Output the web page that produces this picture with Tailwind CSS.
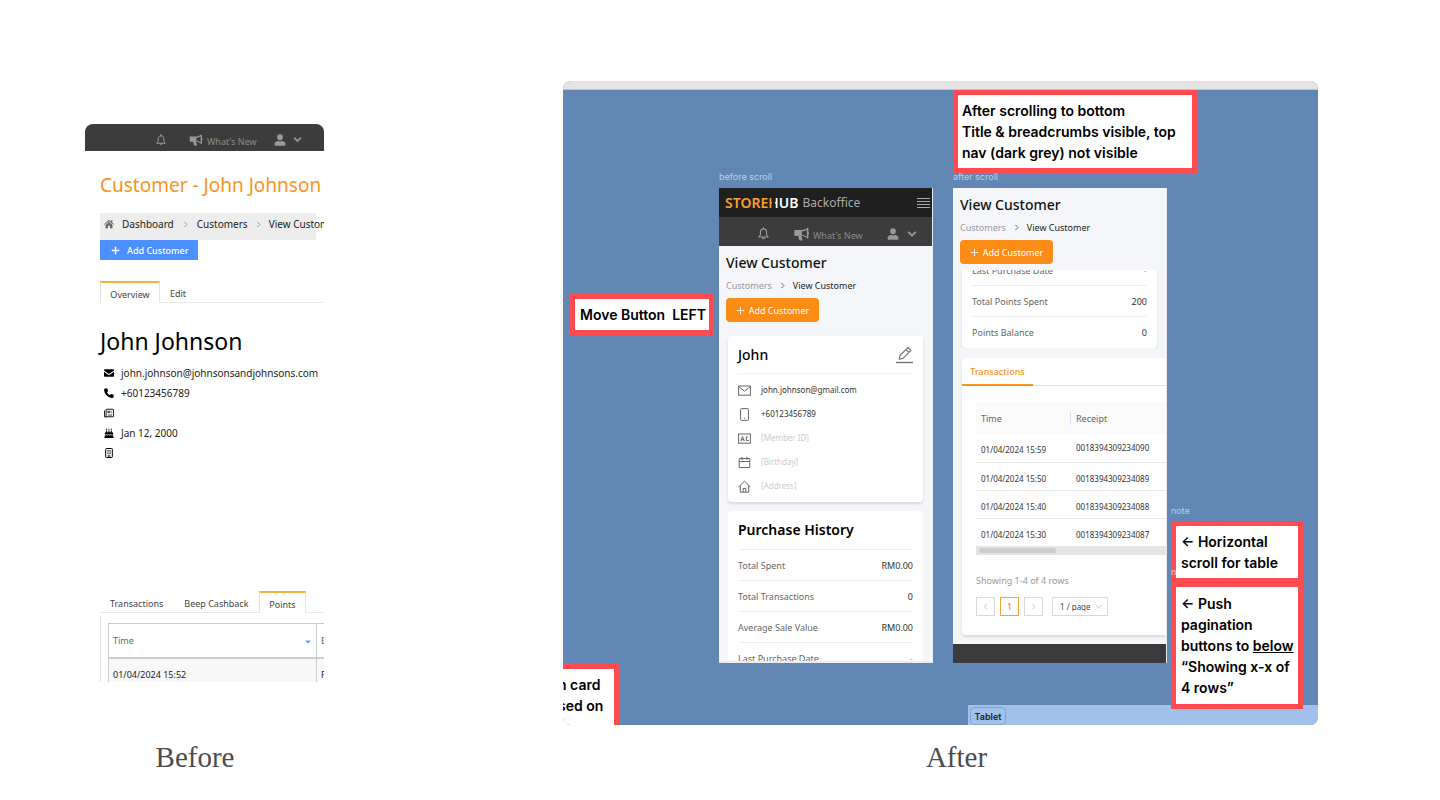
<!DOCTYPE html>
<html lang="en">
<head>
  <meta charset="UTF-8">
  <title>Customer page - Before / After</title>
  <script src="https://cdn.jsdelivr.net/npm/@tailwindcss/browser@4"></script>
</head>
<body class="bg-white text-[#222] font-['Noto_Sans',sans-serif] leading-none">
  <!-- Shared icons -->
  <svg class="hidden">
    <symbol id="bell" viewBox="0 0 24 24"><path d="M12 3.500c-4 0-5.600 3-5.600 6.500v4.500L3.500 18.500h17L17.600 14.500V10c0-3.500-1.600-6.500-5.600-6.500zM12 1v2.500M9.800 19c0 3.500 4.400 3.500 4.400 0" fill="none" stroke="currentColor" stroke-width="2" stroke-linejoin="round" stroke-linecap="round"/></symbol>
    <symbol id="horn" viewBox="0 0 26 24"><path d="M2.500 5h9C16 5 20 4 23 1.500c1-.8 2 0 2 1v5.800c1.300.8 1.300 3.600 0 4.400v5.800c0 1-1 1.800-2 1-3-2.500-6.500-4-9.800-4.400-.8 1.600.2 2.500 1 3.500-.6 1.500-.2 2.400 1.200 3.600-1.500 1.600-5 1.600-6.200.4C8 19.800 7.400 17.500 8 15.500H2.500C1 15.500.5 14.500.5 13.500V7c0-1 .5-2 2-2zM13.500 7.800v5.400c3 .3 6 1.500 8.800 3.400V4.500c-2.800 1.900-5.800 3-8.800 3.300z" fill="currentColor" fill-rule="evenodd"/></symbol>
    <symbol id="user" viewBox="0 0 24 24"><path d="M12 12.500a5.700 5.900 0 1 0 0-11.800 5.700 5.900 0 0 0 0 11.800zM8 14c-4 0-7 2.500-7 6.500 0 1.800.7 3 2.500 3h17c1.800 0 2.500-1.200 2.500-3 0-4-3-6.500-7-6.500-2.500 1-5.500 1-8 0z" fill="currentColor"/></symbol>
    <symbol id="down" viewBox="0 0 12 12"><path d="M1.500 3.500 6 8l4.500-4.500" fill="none" stroke="currentColor" stroke-width="2.200"/></symbol>
    <symbol id="right" viewBox="0 0 12 12"><path d="M4 1.500 8.500 6 4 10.500" fill="none" stroke="currentColor" stroke-width="1.500"/></symbol>
    <symbol id="left" viewBox="0 0 12 12"><path d="M8.500 1.500 4 6l4.500 4.500" fill="none" stroke="currentColor" stroke-width="1.500"/></symbol>
    <symbol id="plus" viewBox="0 0 12 12"><path d="M6 1v10M1 6h10" fill="none" stroke="currentColor" stroke-width="1.200"/></symbol>
  </svg>

  <main class="flex min-h-screen items-start gap-[239px] pl-[85px] pr-[122px] overflow-hidden">

    <!-- Before -->
    <figure class="w-[239px] shrink-0 pt-[124px]">
      <div class="h-[558px] overflow-hidden rounded-lg">
        <nav class="flex h-[27px] items-center bg-[#3c3c3c] pt-1 pl-[70px] text-[9px] text-[#999]">
          <button aria-label="Notifications"><svg class="size-3"><use href="#bell"/></svg></button>
          <a href="#" class="ml-[22px] flex items-center gap-1 text-[#8a8a8a]"><svg class="h-3 w-[14px] text-[#999]"><use href="#horn"/></svg><span class="pt-1">What's New</span></a>
          <button aria-label="Account" class="ml-[17px] flex items-center gap-[7px]"><svg class="size-3"><use href="#user"/></svg><svg class="size-[9px]"><use href="#down"/></svg></button>
        </nav>

        <div class="pl-[15px]">
          <h1 class="mt-[22px] whitespace-nowrap text-[19px] leading-6 text-[#f7941d]">Customer - John Johnson</h1>
          <div class="mt-4 flex h-[27px] w-[216px] items-center whitespace-nowrap bg-[#ededed] pb-[5px] pl-1 text-[10px]">
            <svg class="mr-2 size-[10px] shrink-0 text-[#666]" viewBox="0 0 12 12"><path d="M6 1 0 6.200l.7.8L6 2.600 11.300 7l.7-.8-2-1.700V1.500H8.500v1.700zM6 3.700 1.800 7.200V11h3V8h2.400v3h3V7.200z" fill="currentColor"/></svg>
            <a href="#">Dashboard</a>
            <svg class="mx-2 size-[7px] shrink-0 text-[#888]"><use href="#right"/></svg>
            <a href="#">Customers</a>
            <svg class="mx-[7px] size-[7px] shrink-0 text-[#888]"><use href="#right"/></svg>
            <span>View Customer</span>
          </div>
          <button class="flex h-[20px] w-[98px] items-center gap-[7px] bg-[#4c8fff] pl-[11px] text-[9px] font-medium text-white">
            <svg class="size-[9px]" viewBox="0 0 12 12"><path d="M6 1v10M1 6h10" stroke="currentColor" stroke-width="2"/></svg>Add Customer
          </button>

          <div class="mt-[21px] flex h-[22px] text-[9px] text-[#444]">
            <button class="w-[60px] border-x border-t-2 border-x-[#e4e4e4] border-t-[#fbb040] pt-[3px]">Overview</button>
            <div class="flex grow border-b border-[#e8e8e8]"><button class="pt-1 pl-[10px]">Edit</button></div>
          </div>

          <h2 class="mt-[22px] whitespace-nowrap text-[23px] leading-8 text-black">John Johnson</h2>
          <ul class="mt-[6px] text-[10px] text-[#222]">
            <li class="flex h-5 items-center gap-[7px] pl-1">
              <svg class="size-[10px] text-black" viewBox="0 0 12 12"><path d="M1 1.500h10c.6 0 1 .4 1 1v.6L6 7.300 0 3.100v-.6c0-.6.4-1 1-1zM0 4.500l6 4.100 6-4.100v5c0 .6-.4 1-1 1H1c-.6 0-1-.4-1-1z" fill="currentColor"/></svg>john.johnson@johnsonsandjohnsons.com
            </li>
            <li class="flex h-5 items-center gap-[7px] pl-1">
              <svg class="size-[10px] text-black" viewBox="0 0 12 12"><path d="M.7 1 3 .3c.4-.1.700.100.9.5l1 2.300c.1.300 0 .7-.2.9l-1.200 1c.8 1.600 2 2.800 3.600 3.600l1-1.200c.2-.3.600-.4.9-.2l2.300 1c.4.200.6.500.5.900L11.100 11.400c-.1.300-.4.600-.8.600C4.800 12 .1 7.300.1 1.800.1 1.400.4 1.100.7 1z" fill="currentColor"/></svg>+60123456789
            </li>
            <li class="flex h-5 items-center pl-1">
              <svg class="size-[10px] text-black" viewBox="0 0 12 12" fill="none" stroke="currentColor"><path d="M2.500 2v8c0 1.300-2 1.300-2 0V3M2.500 2.200c0-.5.300-.7.800-.7h7.400c.5 0 .8.300.8.800v7.400c0 .5-.3.800-.8.800H1.500" stroke-width="1.100"/><path d="M4.500 4.800v-.9h2.700v1.600H4.500zM4.500 8.500h5.300M8.800 3.900h1M8.800 6h1" stroke-width=".9"/></svg>
            </li>
            <li class="flex h-5 items-center gap-[7px] pl-1">
              <svg class="size-[10px] text-black" viewBox="0 0 12 12"><path d="M2.500 3h1.300v2.200h1.500V3h1.300v2.200h1.500V3h1.300v2.200c1 0 1.600.5 1.600 1.300v1c-1 1-1.800.7-2.700 0-.8.700-1.800.7-2.600 0-.8.700-1.700.7-2.600 0-.6.600-1.500.8-2.100 0v-1c0-.8.500-1.300 1.500-1.300zM1 8.700c.8.300 1.500.2 2.100-.2.900.5 1.700.5 2.600 0 .9.500 1.700.5 2.600 0 .9.500 1.700.5 2.700 0V10.500h.5V12H.5v-1.500H1zM3.100.4l.7 1.200c0 .9-1.300.9-1.300 0zM6 .4l.6 1.200c0 .9-1.300.9-1.300 0zM8.700.4l.7 1.200c0 .9-1.300.9-1.300 0z" fill="currentColor"/></svg>Jan 12, 2000
            </li>
            <li class="flex h-5 items-center pl-1">
              <svg class="size-[10px] text-black" viewBox="0 0 12 12" fill="none" stroke="currentColor"><rect x="2" y=".6" width="8" height="10.800" rx=".9" stroke-width="1.200"/><path d="M5 11V9.200c0-1 2-1 2 0V11" stroke-width="1"/><path d="M4 3.300h1.500M6.500 3.300H8M4 6h1.500M6.500 6H8" stroke-width="1.500"/></svg>
            </li>
          </ul>

          <div class="mt-32 flex h-[22px] text-[9px] text-[#444]">
            <div class="flex w-[159px] gap-[21px] border-b border-[#e8e8e8] pl-[10px] whitespace-nowrap"><button class="pt-[4px]">Transactions</button><button class="pt-[4px]">Beep Cashback</button></div>
            <button class="w-[47px] border-x border-t-2 border-x-[#e4e4e4] border-t-[#fbb040] pt-[3px]">Points</button>
            <div class="grow border-b border-[#e8e8e8]"></div>
          </div>
          <div class="mt-[3px] border-l border-[#e4e4e4] pt-[7px] pl-[7px]">
            <table class="w-[260px] table-fixed border-collapse text-left text-[9px]">
              <tr class="h-[34px] text-[#666]">
                <th class="w-[208px] border border-b-2 border-[#ccc] pl-1 font-normal"><span class="flex items-center justify-between pr-[5px]">Time<svg class="mt-1 h-1 w-[6px]" viewBox="0 0 6 4"><path d="M0 .5h6L3 3.500z" fill="#6a9bd8"/></svg></span></th>
                <th class="border border-b-2 border-[#ccc] pl-1 font-normal">E</th>
              </tr>
              <tr class="h-[34px] bg-[#f8f8f8]">
                <td class="border border-[#ccc] pl-1">01/04/2024 15:52</td>
                <td class="border border-[#ccc] pl-1">F</td>
              </tr>
            </table>
          </div>
        </div>
      </div>
      <figcaption class="mt-[59px] pr-[19px] text-center font-['Liberation_Serif',serif] text-[29px] leading-8 text-[#4c4c4c]">Before</figcaption>
    </figure>

    <!-- After -->
    <figure class="min-w-0 grow pt-[81px] font-['Inter',sans-serif]">
      <div class="relative h-[644px] overflow-hidden rounded-lg bg-[#6287b4]">
        <div class="h-[9px] border-b border-[#bfc4ca] bg-[#e4e4e4]"></div>

        <!-- Frame: before scroll -->
        <section class="absolute top-[91px] left-[156px] w-[214px]">
          <h3 class="h-4 text-[9px] text-[#bdcde2]">before scroll</h3>
          <div class="flex h-[475px] flex-col overflow-hidden border-r border-b-2 border-[#e8edf5] bg-[#f5f6fa] font-['Noto_Sans',sans-serif]">
            <header class="flex h-[29px] shrink-0 items-center bg-[#1f1f1f] pl-[6px]">
              <span class="text-[14px] font-semibold text-white"><span class="text-[#f7a030]">STORE</span><span class="bg-[linear-gradient(90deg,#f7a030_40%,transparent_40%,transparent_60%,#fff_60%)] bg-clip-text text-transparent">H</span>UB</span>
              <span class="ml-1 grow text-[12px] text-[#aaa]">Backoffice</span>
              <button aria-label="Menu" class="mr-[2px]"><svg class="h-3 w-[13px]" viewBox="0 0 13 12"><path d="M0 1.500h13M0 4.500h13M0 7.500h13M0 10.500h13" stroke="#aaa" stroke-width="1"/></svg></button>
            </header>
            <nav class="flex h-[29px] shrink-0 items-center bg-[#3c3c3c] pt-1 pl-[38px] text-[10px] text-[#999]">
              <button aria-label="Notifications"><svg class="size-[13px]"><use href="#bell"/></svg></button>
              <a href="#" class="ml-6 flex items-center gap-1 whitespace-nowrap text-[#8a8a8a]"><svg class="h-[14px] w-[15px] text-[#999]"><use href="#horn"/></svg><span class="pt-1 text-[9px]">What's New</span></a>
              <button aria-label="Account" class="ml-6 flex items-center gap-2"><svg class="size-3"><use href="#user"/></svg><svg class="size-[10px]"><use href="#down"/></svg></button>
            </nav>

            <div class="px-[7px] pt-[7px]">
              <h1 class="text-[14px] leading-5 font-medium text-[#111]">View Customer</h1>
              <div class="flex h-6 items-center gap-[7px] text-[9px]"><a href="#" class="text-[#999]">Customers</a><svg class="size-[7px] text-[#555]"><use href="#right"/></svg><span>View Customer</span></div>
              <button class="mt-px flex h-6 w-[93px] items-center justify-center gap-1 rounded bg-[#fb8c16] text-[9px] text-white"><svg class="size-[9px]"><use href="#plus"/></svg>Add Customer</button>
            </div>

            <div class="mx-[9px] mt-[14px] rounded bg-white px-[10px] pb-1 shadow-[0_2px_3px_#0000001f]">
              <div class="flex h-[38px] items-center justify-between border-b border-[#f2f2f2]">
                <h2 class="text-[14px] font-medium text-black">John</h2>
                <button aria-label="Edit"><svg class="h-[18px] w-[17px] text-[#777]" viewBox="0 0 17 18" fill="none" stroke="currentColor"><path d="M0 16.500h17" stroke-width="1.400"/><path d="M3.200 13.200 4 9.500 12 1.400 15 4.300 7 12.300zM10 3.500l3 2.900" stroke-width="1.200" stroke-linejoin="round"/></svg></button>
              </div>
              <ul class="pt-1 text-[8px] text-[#333]">
                <li class="flex h-6 items-center gap-[10px]"><svg class="size-[13px] text-[#666]" viewBox="0 0 13 13" fill="none" stroke="currentColor"><rect x=".6" y="2" width="11.800" height="9.200"/><path d="m1 2.800 5.500 4.400L12 2.800"/></svg>john.johnson@gmail.com</li>
                <li class="flex h-6 items-center gap-[10px]"><svg class="size-[13px] text-[#666]" viewBox="0 0 13 13" fill="none" stroke="currentColor"><rect x="2.600" y=".6" width="7.800" height="11.800" rx=".8"/><path d="M6 10.300h1"/></svg>+60123456789</li>
                <li class="flex h-6 items-center gap-[10px] text-[#ccc]"><svg class="size-[13px] text-[#666]" viewBox="0 0 13 13" fill="none" stroke="currentColor"><rect x=".6" y="2" width="11.800" height="9.200"/><path d="M2.800 9 4.500 4.500 6.200 9M3.300 7.700h2.400M8.300 4.500V9M8.300 5h1.500M9 8.500h1.800"/></svg>[Member ID]</li>
                <li class="flex h-6 items-center gap-[10px] text-[#ccc]"><svg class="size-[13px] text-[#666]" viewBox="0 0 13 13" fill="none" stroke="currentColor"><path d="M1.200 2.500h10.600v9H1.200zM1.200 5.500h10.600M4 1v3M9 1v3"/></svg>[Birthday]</li>
                <li class="flex h-6 items-center gap-[10px] text-[#ccc]"><svg class="size-[13px] text-[#666]" viewBox="0 0 13 13" fill="none" stroke="currentColor"><path d="M.6 7 6.500 1.200 12.400 7M2.300 5.700v6.500h8.400V5.700M5.200 12V8.500h2.600V12"/></svg>[Address]</li>
              </ul>
            </div>

            <div class="mx-[9px] mt-[9px] rounded bg-white px-[10px] text-[9px] text-[#666]">
              <h2 class="flex h-[38px] items-center text-[14px] font-semibold text-black">Purchase History</h2>
              <dl class="divide-y divide-[#eee] border-t border-[#eee]">
                <div class="flex h-[31px] items-center justify-between"><dt>Total Spent</dt><dd class="text-[#333]">RM0.00</dd></div>
                <div class="flex h-[31px] items-center justify-between"><dt>Total Transactions</dt><dd class="text-[#333]">0</dd></div>
                <div class="flex h-[31px] items-center justify-between"><dt>Average Sale Value</dt><dd class="text-[#333]">RM0.00</dd></div>
                <div class="flex h-[31px] items-center justify-between"><dt>Last Purchase Date</dt><dd class="text-[#f7a030]">-</dd></div>
              </dl>
            </div>
          </div>
        </section>

        <!-- Frame: after scroll -->
        <section class="absolute top-[91px] left-[390px] w-[214px]">
          <h3 class="h-4 text-[9px] text-[#bdcde2]">after scroll</h3>
          <div class="flex h-[475px] flex-col overflow-hidden border-r border-[#e8edf5] bg-[#f5f6fa] font-['Noto_Sans',sans-serif]">
            <div class="px-[7px] pt-[7px]">
              <h1 class="text-[14px] leading-5 font-medium text-[#111]">View Customer</h1>
              <div class="flex h-6 items-center gap-[7px] text-[9px]"><a href="#" class="text-[#999]">Customers</a><svg class="size-[7px] text-[#555]"><use href="#right"/></svg><span>View Customer</span></div>
              <button class="mt-px flex h-6 w-[93px] items-center justify-center gap-1 rounded bg-[#fb8c16] text-[9px] text-white"><svg class="size-[9px]"><use href="#plus"/></svg>Add Customer</button>
            </div>

            <!-- scrolled content, cut by the sticky title -->
            <div class="mt-[6px] flex h-[78px] shrink-0 flex-col justify-end overflow-y-clip [overflow-clip-margin:4px]">
              <dl class="mx-[9px] divide-y divide-[#eee] rounded-b bg-white px-[10px] text-[9px] text-[#666] shadow-[0_2px_3px_#0000001f]">
                <div class="flex h-[31px] items-center justify-between"><dt>Last Purchase Date</dt><dd class="text-[#f7a030]">-</dd></div>
                <div class="flex h-[31px] items-center justify-between"><dt>Total Points Spent</dt><dd class="text-[#333]">200</dd></div>
                <div class="flex h-[31px] items-center justify-between"><dt>Points Balance</dt><dd class="text-[#333]">0</dd></div>
              </dl>
            </div>

            <div class="ml-[9px] mt-[10px] h-[277px] shrink-0 rounded-l bg-white shadow-[0_2px_3px_#0000001f]">
              <div class="flex h-7 border-b border-[#e0e0e0]">
                <button class="h-7 w-[71px] border-b-2 border-[#f7941d] text-[9px] font-medium text-[#f7941d]">Transactions</button>
              </div>
              <div class="ml-[14px] overflow-hidden pt-4">
                <table class="w-[210px] table-fixed border-collapse text-left text-[8px] text-[#333]">
                  <tr class="h-8 bg-[#fafafa] text-[9px] text-[#666]"><th class="w-[94px] pl-[5px] font-normal">Time</th><th class="font-normal"><span class="border-l border-[#d3e2fa] pl-[5px]">Receipt</span></th></tr>
                  <tr class="h-7 border-b border-[#e8e8e8]"><td class="pt-[5px] pl-[5px]">01/04/2024 15:59</td><td class="pl-[6px]">0018394309234090</td></tr>
                  <tr class="h-7 border-b border-[#e8e8e8]"><td class="pt-[5px] pl-[5px]">01/04/2024 15:50</td><td class="pt-[5px] pl-[6px]">0018394309234089</td></tr>
                  <tr class="h-7 border-b border-[#e8e8e8]"><td class="pt-[5px] pl-[5px]">01/04/2024 15:40</td><td class="pt-[5px] pl-[6px]">0018394309234088</td></tr>
                  <tr class="h-7"><td class="pt-[5px] pl-[5px]">01/04/2024 15:30</td><td class="pt-[5px] pl-[6px]">0018394309234087</td></tr>
                </table>
                <div class="h-[9px] bg-[#e4e4e4] pt-[2px] pl-[3px]"><div class="h-[5px] w-[77px] rounded-full bg-[#cdcdcd]"></div></div>
                <p class="mt-[21px] text-[9px] text-[#999]">Showing 1-4 of 4 rows</p>
                <div class="mt-3 flex gap-[5px] text-[9px] text-[#444]">
                  <button aria-label="Previous page" class="flex size-[19px] items-center justify-center border border-[#d9d9d9] text-[#bbb]"><svg class="size-[7px]"><use href="#left"/></svg></button>
                  <button class="size-[19px] border border-[#f7a030] font-medium text-[#f7941d]">1</button>
                  <button aria-label="Next page" class="flex size-[19px] items-center justify-center border border-[#d9d9d9] text-[#bbb]"><svg class="size-[7px]"><use href="#right"/></svg></button>
                  <label class="relative ml-1">
                    <select aria-label="Rows per page" class="h-[19px] w-14 appearance-none border border-[#d9d9d9] pl-[7px] text-[8px]"><option>1 / page</option></select>
                    <svg class="absolute top-[6px] right-[6px] size-[7px] text-[#bbb]" viewBox="0 0 12 12"><path d="m1 3 5 6 5-6" fill="none" stroke="currentColor" stroke-width="1.500"/></svg>
                  </label>
                </div>
              </div>
            </div>
            <footer class="mt-auto h-[19px] shrink-0 bg-[#3b3b3b]"></footer>
          </div>
        </section>

        <!-- Tablet area -->
        <section class="absolute right-0 bottom-0 left-[405px] h-5 bg-[#a1c0ea] pt-[2px] pl-[2px]">
          <h3 class="flex h-[18px] w-9 items-center justify-center rounded border border-[#86a4cf] text-[9px] font-semibold text-[#222]">Tablet</h3>
        </section>

        <!-- Notes -->
        <h3 class="absolute top-[425px] left-[608px] text-[9px] text-[#bdcde2]">note</h3>
        <p class="absolute top-[9px] left-[390px] w-[244px] border-5 border-[#ff4b4f] bg-white py-[5px] pl-1 text-[14px] leading-[21px] font-semibold text-black">After scrolling to bottom<br>Title &amp; breadcrumbs visible, top nav (dark grey) not visible</p>
        <p class="absolute top-[213px] left-[7px] w-[144px] border-5 border-[#ff4b4f] bg-white py-[5px] pl-[5px] text-[14px] leading-[21px] font-semibold whitespace-pre text-black">Move Button  LEFT</p>
        <p class="absolute top-[440px] left-[608px] w-[132px] border-5 border-[#ff4b4f] bg-white py-[5px] pl-[5px] text-[14px] leading-[21px] font-semibold text-black">← Horizontal scroll for table</p>
        <h3 class="absolute top-[486px] left-[608px] w-[5px] overflow-hidden text-[9px] text-[#f5c6cf]">n</h3>
        <p class="absolute top-[501px] left-[608px] w-[132px] border-5 border-[#ff4b4f] bg-white py-[6px] pl-[5px] text-[14px] leading-[21px] font-semibold text-black">← Push pagination buttons to <u>below</u> “Showing x-x of 4 rows”</p>
        <p class="absolute top-[583px] left-0 h-[70px] w-14 overflow-hidden border-t-5 border-r-5 border-[#ff4b4f] bg-white pt-[5px] text-[14px] leading-[21px] font-semibold text-black"><span class="-ml-[5px] block whitespace-nowrap">n card<br>sed on</span></p>
      </div>
      <figcaption class="mt-4 pl-8 text-center font-['Liberation_Serif',serif] text-[29px] leading-8 text-[#4c4c4c]">After</figcaption>
    </figure>
  </main>
</body>
</html>
